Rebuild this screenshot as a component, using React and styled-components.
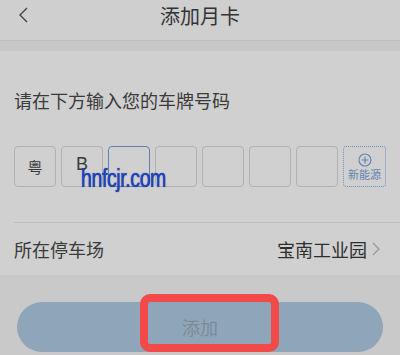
import React from 'react';
import styled, { createGlobalStyle } from 'styled-components';

const Global = createGlobalStyle`
  html, body { margin: 0; padding: 0; }
  body {
    width: 400px;
    height: 355px;
    overflow: hidden;
    background: #c9c9c9;
    font-family: "Noto Sans CJK SC", "Noto Sans", sans-serif;
  }
`;

const Page = styled.div`
  position: relative;
  width: 400px;
  height: 355px;
  overflow: hidden;
  display: flex;
  flex-direction: column;
`;

const Header = styled.div`
  height: 40px;
  flex-shrink: 0;
  background: #cfcfcf;
  border-bottom: 1px solid #bdbdbd;
  display: flex;
  align-items: center;
  justify-content: center;
  position: relative;
`;

const Back = styled.div`
  position: absolute;
  left: 17px;
  top: 6px;
  width: 14px;
  height: 18px;
  display: flex;
`;

const Title = styled.div`
  font-size: 20px;
  color: #333;
  line-height: 1;
  margin-top: -8px;
`;

const Band = styled.div`
  height: 10px;
  flex-shrink: 0;
  background: #c7c7c7;
`;

const Section = styled.div`
  background: #d0d0d0;
  padding-left: 14px;
  flex-shrink: 0;
`;

const Prompt = styled.div`
  padding-top: 37px;
  font-size: 18px;
  line-height: 24px;
  color: #3a3a3a;
`;

const Plates = styled.div`
  position: relative;
  display: flex;
  gap: 5px;
  margin-top: 34px;
  height: 41px;
`;

const Cell = styled.div`
  width: 42px;
  height: 41px;
  box-sizing: border-box;
  border: ${(p) => (p.$active ? '1.5px solid #5d82b0' : '1.5px solid #b1b1b1')};
  border-radius: 4px;
  display: flex;
  align-items: center;
  justify-content: center;
  color: #3a3a3a;
  font-size: ${(p) => (p.$latin ? '18px' : '15px')};
  font-family: ${(p) => (p.$latin ? '"Liberation Sans", Arial, sans-serif' : 'inherit')};
  padding-bottom: ${(p) => (p.$latin ? '4px' : '0')};
`;

const NewEnergy = styled.div`
  width: 43px;
  height: 41px;
  box-sizing: border-box;
  border: 1.5px dotted #6f8fb7;
  border-radius: 3px;
  display: flex;
  flex-direction: column;
  align-items: center;
  justify-content: center;
  gap: 1px;
  color: #6485b0;
  font-size: 11px;
  line-height: 13px;
`;

const Watermark = styled.div`
  position: absolute;
  left: 67px;
  top: 20px;
  font-family: "Liberation Sans", Arial, sans-serif;
  font-size: 25px;
  color: #2142c4;
  transform: scaleX(0.78);
  transform-origin: left top;
  text-shadow: 0 0 1px #0b1f6e;
  letter-spacing: -0.5px;
  line-height: 1;
`;

const Divider = styled.div`
  height: 1px;
  background: #bdbdbd;
  margin-top: 35px;
`;

const Row = styled.div`
  height: 52px;
  display: flex;
  align-items: center;
  justify-content: space-between;
  padding-right: 19px;
  font-size: 18px;
  color: #3a3a3a;
`;

const RowValue = styled.div`
  display: flex;
  align-items: center;
  gap: 4px;
  color: #2e2e2e;
`;

const Footer = styled.div`
  flex: 1;
  background: #c9c9c9;
  padding: 27px 17px 0;
  position: relative;
`;

const AddButton = styled.div`
  height: 50px;
  border-radius: 25px;
  background: #8fa6ba;
  color: #7b8a98;
  font-size: 18px;
  display: flex;
  align-items: center;
  justify-content: center;
`;

const Highlight = styled.div`
  position: absolute;
  left: 140px;
  top: 19px;
  width: 139px;
  height: 58px;
  box-sizing: border-box;
  border: 8px solid #f14a48;
  border-radius: 10px;
`;

export default function App() {
  const cells = ['粤', 'B', '', '', '', '', ''];
  return (
    <>
      <Global />
      <Page>
        <Header>
          <Back>
            <svg width="14" height="18" viewBox="0 0 14 18">
              <path d="M10 2 L3 9 L10 16" fill="none" stroke="#444" strokeWidth="1.4" />
            </svg>
          </Back>
          <Title>添加月卡</Title>
        </Header>
        <Band />
        <Section>
          <Prompt>请在下方输入您的车牌号码</Prompt>
          <Plates>
            {cells.map((c, i) => (
              <Cell key={i} $active={i === 2} $latin={c === 'B'}>
                {c}
              </Cell>
            ))}
            <NewEnergy>
              <svg width="14" height="14" viewBox="0 0 14 14">
                <circle cx="7" cy="7" r="6" fill="none" stroke="#6485b0" strokeWidth="1.2" />
                <path d="M7 3.5 V10.5 M3.5 7 H10.5" stroke="#6485b0" strokeWidth="1.2" />
              </svg>
              <span>新能源</span>
            </NewEnergy>
            <Watermark>hnfcjr.com</Watermark>
          </Plates>
          <Divider />
          <Row>
            <span>所在停车场</span>
            <RowValue>
              宝南工业园
              <svg width="10" height="16" viewBox="0 0 10 16">
                <path d="M2 2 L8 8 L2 14" fill="none" stroke="#9a9a9a" strokeWidth="1.3" />
              </svg>
            </RowValue>
          </Row>
        </Section>
        <Footer>
          <AddButton>添加</AddButton>
          <Highlight />
        </Footer>
      </Page>
    </>
  );
}
